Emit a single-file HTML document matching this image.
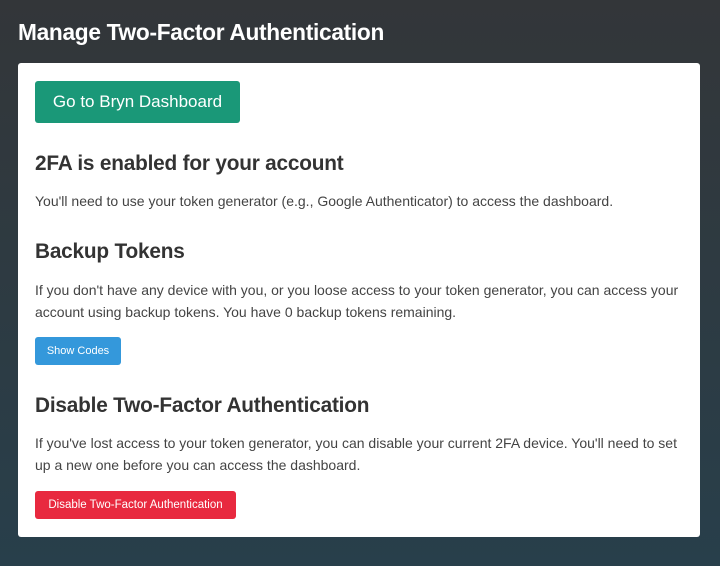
<!DOCTYPE html>
<html><head><meta charset="utf-8"><style>
body{margin:0;width:720px;height:566px;overflow:hidden;background:linear-gradient(#333639,#283f4b);font-family:"Liberation Sans",sans-serif;position:relative}
h1{position:absolute;left:18px;top:19px;margin:0;font-size:22.7px;font-weight:bold;color:#fff;letter-spacing:-0.3px}
.card{position:absolute;left:18px;top:63px;width:682px;height:474px;background:#fff;border-radius:3px}
.btn{position:absolute;color:#fff;border-radius:3px;display:flex;align-items:center;justify-content:center;white-space:nowrap}
h2{position:absolute;margin:0;left:35px;font-size:20.8px;font-weight:bold;color:#333;white-space:nowrap;letter-spacing:-0.2px}
p{position:absolute;margin:0;left:35px;font-size:14px;line-height:21.5px;color:#444;width:665px}
</style></head><body>
<h1>Manage Two-Factor Authentication</h1>
<div class="card"></div>
<div class="btn" style="left:35px;top:81px;width:205px;height:42px;background:#1a9878;font-size:17px">Go to Bryn Dashboard</div>
<h2 style="top:152px">2FA is enabled for your account</h2>
<p style="top:191px">You'll need to use your token generator (e.g., Google Authenticator) to access the dashboard.</p>
<h2 style="top:240px">Backup Tokens</h2>
<p style="top:280px">If you don't have any device with you, or you loose access to your token generator, you can access your<br>account using backup tokens. You have 0 backup tokens remaining.</p>
<div class="btn" style="left:35px;top:337px;width:86px;height:28px;background:#3498db;font-size:11px">Show Codes</div>
<h2 style="top:394px">Disable Two-Factor Authentication</h2>
<p style="top:433px">If you've lost access to your token generator, you can disable your current 2FA device. You'll need to set<br>up a new one before you can access the dashboard.</p>
<div class="btn" style="left:35px;top:491px;width:201px;height:28px;background:#e8293f;font-size:11.5px">Disable Two-Factor Authentication</div>
</body></html>
